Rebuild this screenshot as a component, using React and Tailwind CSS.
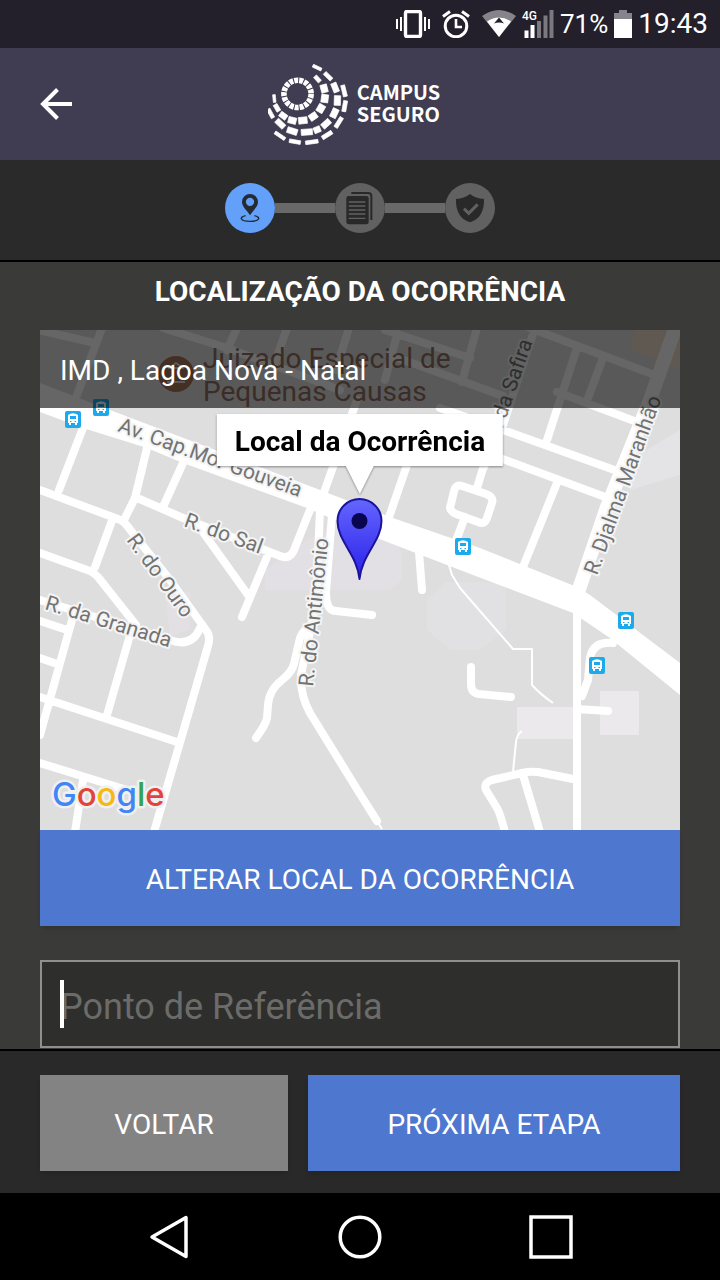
import React, { useState } from 'react';

const StatusBar = () => (
  <div className="flex h-12 items-center justify-end bg-[#23202c] pr-3 text-white">
    <svg className="mr-3 h-7 w-[34px]" viewBox="0 0 34 28" fill="none" stroke="currentColor">
      <rect x="9.5" y="1.5" width="15" height="25" rx="1.5" strokeWidth="3.4" />
      <path d="M1 9v10M5 7v14M29 7v14M33 9v10" strokeWidth="2" />
    </svg>
    <svg className="mr-3 h-7 w-7" viewBox="0 0 28 28" fill="none" stroke="currentColor">
      <circle cx="14" cy="16" r="10.8" strokeWidth="3" />
      <path d="M14 9v8h6" strokeWidth="2.6" />
      <path d="M1 6.500l7-5M27 6.500l-7-5" strokeWidth="3" />
    </svg>
    <svg className="mr-1.5 h-7 w-[34px]" viewBox="0 0 34 28" fill="currentColor">
      <path d="M0 6Q17-6 34 6L17 27Z" opacity=".45" />
      <path d="M5 11.500Q17 3.500 29 11.500L17 27Z" />
      <path d="M12 13.500l5-6 5 6Q17 11.500 12 13.500Z" fill="#23202c" />
    </svg>
    <svg className="mr-1.5 h-7 w-8 overflow-visible" viewBox="0 0 32 28" fill="currentColor">
      <text x="0" y="10" className="font-[Roboto] text-[12px] font-medium">4G</text>
      <path d="M2.500 20.500h4V28h-4zM8.500 15h4V28h-4z" />
      <path d="M15 11h4V28h-4zM21.500 5.500h4V28h-4zM27.500 0h4V28h-4z" opacity=".4" />
    </svg>
    <span className="mr-1.5 text-[26px] leading-8">71%</span>
    <svg className="mr-1.5 h-7 w-[18px]" viewBox="0 0 18 28" fill="currentColor">
      <path d="M5 0h8v3h5v6H0V3h5z" opacity=".45" />
      <path d="M0 9h18v19H0z" />
    </svg>
    <span className="text-[28px] leading-8">19:43</span>
  </div>
);

// Tiles of the globe: centre x, centre y, direction, length, thickness
const tiles = [
  [158, 48, 48, 22, 12],
  [178, 77, 75, 24, 20],
  [180, 107, 98, 24, 21],
  [168, 137, 120, 24, 21],
  [145, 161, 146, 24, 20],
  [114, 173, 174, 26, 20],
  [82, 173, 194, 24, 19],
  [55, 159, 216, 23, 17],
  [36, 135, 240, 23, 13],
  [28, 107, 264, 23, 8],
  [157, 14, 25, 28, 9],
  [190, 40, 44, 29, 12],
  [211, 74, 68, 29, 17],
  [218, 113, 92, 29, 19],
  [209, 151, 115, 28, 19],
  [184, 183, 138, 29, 18],
  [126, 208, 176, 34, 18],
  [157, 201, 158, 20, 18],
  [82, 205, 198, 31, 18],
  [46, 183, 224, 31, 17],
  [17, 152, 242, 30, 11],
  [238, 84, 76, 35, 12],
  [240, 130, 100, 33, 12],
  [222, 179, 122, 35, 12],
  [187, 217, 148, 34, 12],
  [141, 238, 172, 38, 11],
  [90, 237, 190, 34, 11],
  [45, 219, 214, 36, 10],
];

const Header = () => (
  <header className="grid h-28 grid-cols-[32px_1fr_44px] items-center bg-[#403c51] px-10 text-white">
    <button type="button" aria-label="Voltar">
      <svg className="h-8 w-8" viewBox="0 0 32 32" fill="none" stroke="currentColor" strokeWidth="4">
        <path d="M32 16H3M17.500 1.500L3 16l14.500 14.500" />
      </svg>
    </button>
    <div className="flex items-center justify-center gap-2">
      <svg className="size-[81px]" viewBox="9 3 244 244" fill="currentColor">
        <circle
          cx="98"
          cy="93"
          r="41"
          fill="none"
          stroke="currentColor"
          strokeWidth="17"
          strokeDasharray="12.150 3"
        />
        <g stroke="currentColor" strokeWidth="2">
          {tiles.map(([x, y, angle, length, thickness]) => (
            <rect
              key={`${x}-${y}`}
              x={-length / 2}
              y={-thickness / 2}
              width={length}
              height={thickness}
              transform={`translate(${x} ${y}) rotate(${angle})`}
            />
          ))}
        </g>
      </svg>
      <div className="pb-0.5 font-['Noto_Sans_CJK_JP',sans-serif] text-xl leading-[22px] font-bold">
        <div>CAMPUS</div>
        <div>SEGURO</div>
      </div>
    </div>
  </header>
);

const PinIcon = () => (
  <svg viewBox="0 0 150 150" className="size-full" fill="#252b33">
    <path
      fillRule="evenodd"
      d="M75 97C68 84 51 72 51 57a24 24 0 0 1 48 0C99 72 82 84 75 97ZM75 44a12.500 12.500 0 1 0 0 25a12.500 12.500 0 1 0 0-25Z"
    />
    <path d="M62 98C42 102 44 115 75 115S108 102 88 98" fill="none" stroke="#252b33" strokeWidth="4" />
  </svg>
);

const FilesIcon = () => (
  <svg viewBox="0 0 150 150" className="size-full" fill="none">
    <path d="M49 30H100Q109 30 109 39V111" stroke="#292929" strokeWidth="6" />
    <rect x="34" y="39" width="67" height="85" rx="7" fill="#292929" />
    <path d="M41 57h50M41 69h50M41 81h50M41 93h50M41 106h50" stroke="#616161" strokeWidth="4" />
  </svg>
);

const ShieldIcon = () => (
  <svg viewBox="0 0 150 150" className="size-full" fill="none">
    <path d="M75 33Q92 46 117 48C118 80 108 107 75 118C42 107 32 80 33 48Q58 46 75 33Z" fill="#292929" />
    <path d="M57 77l14 14 27-27" stroke="#616161" strokeWidth="9" />
  </svg>
);

const Stepper = () => (
  <div className="flex justify-center border-b-2 border-black bg-[#2a2a2a] pt-[23px] pb-[27px]">
    <div className="flex items-center">
      <div className="size-[50px] rounded-full bg-[#62a0f9]"><PinIcon /></div>
      <div className="h-[10px] w-[60px] bg-[#696969]" />
      <div className="size-[50px] rounded-full bg-[#616161]"><FilesIcon /></div>
      <div className="h-[10px] w-[60px] bg-[#696969]" />
      <div className="size-[50px] rounded-full bg-[#616161]"><ShieldIcon /></div>
    </div>
  </div>
);

const avenue =
  'M0 53L70 80L280 160L350 187L440 218L537 257L550 265L640 333V365L570 308L533 283L433 245L337 208L267 178L143 133L107 118L43 98L0 82Z';

const streets = [
  'M43 98L19 160',
  'M0 160L78 189Q84 191 88 197L130 250L166 300Q171 306 168 316L114 502',
  'M107 118L95 168L84 190',
  'M143 133L123 177',
  'M95 167L143 188L217 217L240 226Q250 230 254 220L270 180',
  'M160 198L208 265',
  'M229 222L202 287',
  'M73 188L55 237',
  'M0 223L50 241Q54 243 58 247L96 295',
  'M0 270L130 310Q152 318 160 298',
  'M90 305L67 385',
  'M32 290L0 405',
  'M0 291L27 300',
  'M0 328L17 334',
  'M0 367L137 412',
  'M0 433L87 460',
  'M43 450L35 502',
  'M280 180L276 272L261 345Q260 365 270 383L320 464L337 491',
  'M292 185L286 262Q286 281 296 281L332 285',
  'M277 290Q262 300 260 308L254 334Q252 342 242 350Q229 360 228 375L227 388Q226 394 216 408',
  'M379 222L382 260',
  'M367 135L348 190',
  'M444 135L437 158',
  'M425 187L414 216',
  'M422 156L446 164Q454 167 452 173L447 188Q445 195 438 192L416 184Q408 180 411 174L414 161Q416 154 422 156Z',
  'M400 106L568 168',
  'M400 78L463 100L580 142',
  'M517 153L483 237',
  'M537 18L507 110',
  'M563 28L548 68',
  'M517 62L597 92',
  'M490 -2L620 47',
  'M496 -5L463 95L444 137',
  'M437 -2L422 52',
  'M345 0L430 28',
  'M350 25L463 66',
  'M357 5L345 50',
  'M317 70L283 165',
  'M-2 0L55 13',
  'M62 -2L37 65',
  'M123 -2L187 18L300 60',
  'M197 -2L187 20',
  'M247 -2L235 32',
  'M309 -2L296 40',
  'M537 270V502',
  'M573 313Q553 311 550 328L548 350L542 366',
  'M537 379L568 381',
  'M431 337V354Q431 363 439 364L471 367',
  'M533 449L498 442Q490 441 482 443L452 450Q443 453 446 460L457 478Q460 483 465 502',
  'M483 445L500 502',
];

const stops = [
  { x: 25, y: 81 },
  { x: 53, y: 69 },
  { x: 415, y: 208 },
  { x: 578, y: 282 },
  { x: 549, y: 327 },
];

const labels = [
  { text: 'Av. Cap.Mor Gouveia', x: 77, y: 101, angle: 20 },
  { text: 'R. do Sal', x: 143, y: 196, angle: 20 },
  { text: 'R. do Ouro', x: 86, y: 210, angle: 54 },
  { text: 'R. da Granada', x: 4, y: 279, angle: 17 },
  { text: 'R. do Antimônio', x: 273, y: 357, angle: -84 },
  { text: 'R. Djalma Maranhão', x: 557, y: 246, angle: -70 },
  { text: 'R. da Safira', x: 458, y: 112, angle: -71 },
];

const MapDrawing = () => (
  <svg
    className="size-full font-[Roboto]"
    viewBox="0 0 640 500"
    preserveAspectRatio="xMidYMid slice"
    fill="none"
    strokeLinejoin="round"
  >
    <defs>
      <linearGradient id="pin" x1="0" y1="0" x2="0" y2="1">
        <stop offset="0" stopColor="#6466ff" />
        <stop offset="1" stopColor="#2a20e8" />
      </linearGradient>
    </defs>
    <rect width="640" height="500" fill="#dedede" />
    <path d="M595 0H640V38L590 20Z" fill="#f0dfca" />
    <path d="M590 130L640 100V145L590 160Z" fill="#e4e3e5" />
    <path d="M225 240L290 195H350L362 225V250L350 260H225Z" fill="#e2e0e4" />
    <path d="M405 252H466V300L440 320H410L387 300V270Z" fill="#e1e0e2" />
    <path d="M125 262H150V300L130 306Z" fill="#e2e0e3" />
    <path d="M477 377h57v32h-57zM560 361h39v44h-39z" fill="#ebe9ec" />
    <path d={avenue} fill="#fff" />
    <path d={streets.join('')} stroke="#fff" strokeWidth="8" strokeLinecap="round" />
    <path d="M636 -4L610 70L567 177L537 265" stroke="#fff" strokeWidth="14" />
    <path
      d="M408 232L412 245L420 258L473 319H492V355Q500 364 513 373M482 401Q477 404 476 412L473 442M337 491L342 499"
      stroke="#fff"
      strokeWidth="2"
    />

    <circle cx="136" cy="44" r="19" fill="#a8785c" stroke="#e6e0dc" strokeWidth="2" />
    <path d="M127 52h18M129 38l7-5 7 5z" stroke="#e6e0dc" strokeWidth="2" />
    <g fill="#94705e" className="text-[28px]">
      <text x="163" y="38">Juizado Especial de</text>
      <text x="163" y="71">Pequenas Causas</text>
    </g>

    <g fill="#737373" stroke="#f4f4f4" strokeWidth="4" className="text-[21px] [paint-order:stroke]">
      {labels.map((l) => (
        <text key={l.text} transform={`translate(${l.x} ${l.y}) rotate(${l.angle})`}>
          {l.text}
        </text>
      ))}
    </g>

    {stops.map((s) => (
      <g key={s.x} transform={`translate(${s.x} ${s.y})`}>
        <rect width="16" height="17" rx="2" fill="#1baaec" />
        <path
          fillRule="evenodd"
          fill="#fff"
          d="M3 4Q8 .5 13 4V12H12v2h-2v-2H6v2H4v-2H3zM5 5v3h6V5zM5 10v1h1.500v-1zM9.500 10v1H11v-1z"
        />
      </g>
    ))}

    <path
      d="M319.500 249C317 224 297.500 211 297.500 191a22 22 0 0 1 44 0C341.500 211 322 224 319.500 249Z"
      fill="url(#pin)"
      stroke="#1b1399"
      strokeWidth="2"
    />
    <circle cx="319.500" cy="191" r="8" fill="#0a0550" />

    <text x="12" y="476" stroke="#f0f0f0" strokeWidth="5" className="font-[Inter] text-[33px] font-medium [paint-order:stroke]">
      <tspan fill="#4285f4">G</tspan>
      <tspan fill="#e0443a">o</tspan>
      <tspan fill="#f4b912">o</tspan>
      <tspan fill="#4285f4">g</tspan>
      <tspan fill="#35a253">l</tspan>
      <tspan fill="#e0443a">e</tspan>
    </text>
  </svg>
);

const LocationMap = () => (
  <div className="relative h-[500px] overflow-hidden">
    <MapDrawing />
    <p className="absolute inset-x-0 top-0 bg-black/60 px-5 pt-[25px] pb-[21px] text-[28px] leading-8 text-white">
      IMD , Lagoa Nova - Natal
    </p>
    <div className="absolute top-[84px] left-1/2 flex -translate-x-1/2 flex-col items-center drop-shadow-[0_1px_1px_rgba(0,0,0,0.4)]">
      <div className="bg-white px-[18px] pt-3 pb-2 text-[28px] leading-8 font-bold whitespace-nowrap text-black">
        Local da Ocorrência
      </div>
      <svg className="h-7 w-7" viewBox="0 0 28 28" fill="#fff">
        <path d="M0 0h28L14 28z" />
      </svg>
    </div>
  </div>
);

const NavBar = () => (
  <nav className="flex h-[87px] items-center justify-evenly bg-black text-white">
    <button type="button" aria-label="Retornar">
      <svg className="size-11" viewBox="0 0 44 44" fill="none" stroke="currentColor" strokeWidth="3.500">
        <path d="M39 2.500v39L5 22z" strokeLinejoin="round" />
      </svg>
    </button>
    <button type="button" aria-label="Início">
      <svg className="size-11" viewBox="0 0 44 44" fill="none" stroke="currentColor" strokeWidth="3.500">
        <circle cx="22" cy="22" r="19.800" />
      </svg>
    </button>
    <button type="button" aria-label="Recentes">
      <svg className="size-11" viewBox="0 0 44 44" fill="none" stroke="currentColor" strokeWidth="3.500">
        <path d="M2 2h40v40H2z" />
      </svg>
    </button>
  </nav>
);

const App = () => {
  const [reference, setReference] = useState('');

  return (
    <div className="flex min-h-screen flex-col bg-[#3a3a38] font-[Roboto,sans-serif]">
      <StatusBar />
      <Header />
      <Stepper />

      <main className="flex-1 px-10">
        <h1 className="pt-[14px] pb-[22px] text-center text-[28px] leading-8 font-bold text-white">
          LOCALIZAÇÃO DA OCORRÊNCIA
        </h1>
        <LocationMap />
        <button type="button" className="h-24 w-full bg-[#4e77cf] pt-1 text-[28px] leading-8 text-white shadow-md">
          ALTERAR LOCAL DA OCORRÊNCIA
        </button>
        <div className="relative mt-[34px]">
          <input
            type="text"
            aria-label="Ponto de Referência"
            placeholder="Ponto de Referência"
            value={reference}
            onChange={(e) => setReference(e.target.value)}
            className="block h-[88px] w-full border-2 border-[#8f8f8e] bg-[#2e2e2d] px-[18px] pt-1.5 text-4xl text-white outline-none placeholder:text-[#6b6b6a]"
          />
          {!reference && <span className="absolute top-5 left-5 h-12 w-1 bg-white" />}
        </div>
      </main>

      <footer className="flex gap-5 border-t-2 border-black bg-[#292929] px-10 pt-6 pb-[22px] text-[28px] leading-8 text-white">
        <button type="button" className="h-24 flex-[2] bg-[#838383] pt-1 shadow-md">VOLTAR</button>
        <button type="button" className="h-24 flex-[3] bg-[#4e77cf] pt-1 shadow-md">PRÓXIMA ETAPA</button>
      </footer>
      <NavBar />
    </div>
  );
};

export default App;
